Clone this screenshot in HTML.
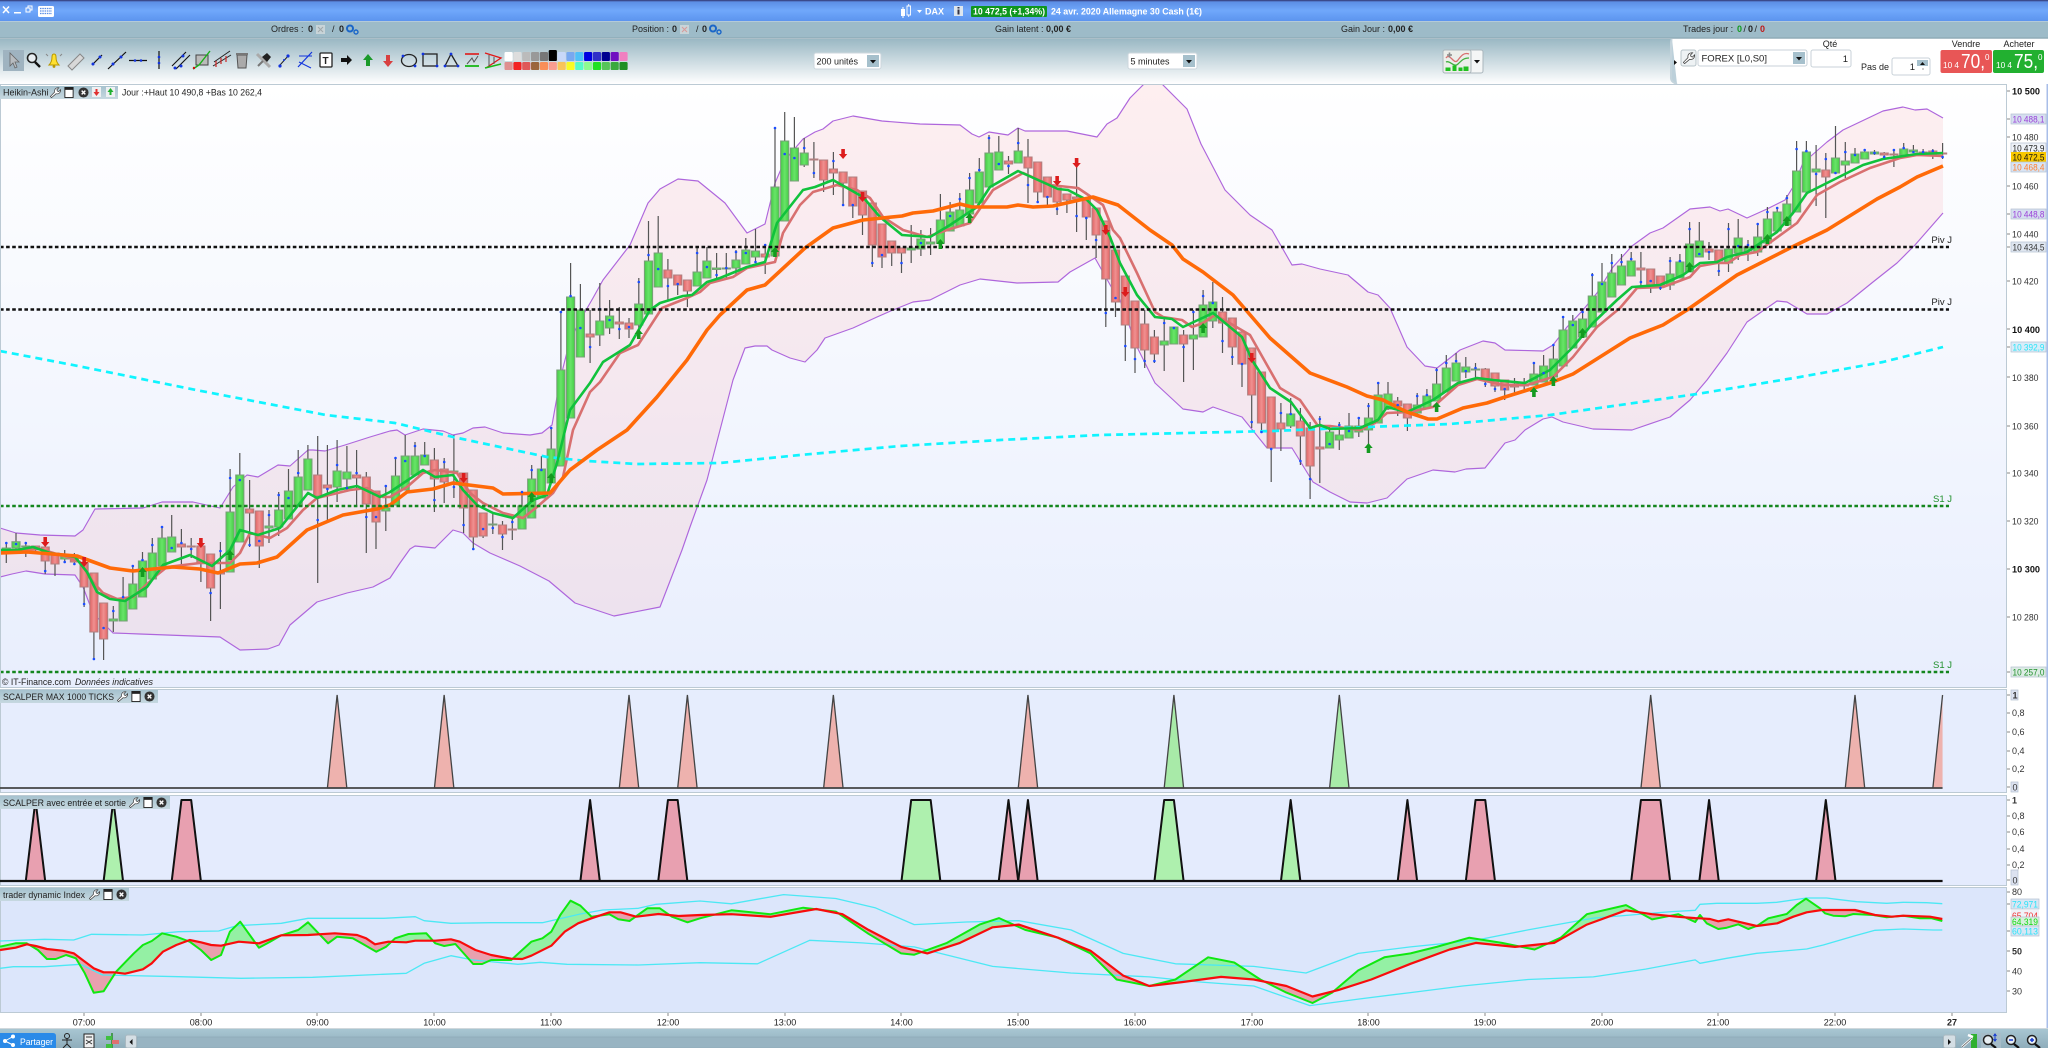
<!DOCTYPE html>
<html><head><meta charset="utf-8"><title>DAX</title>
<style>
html,body{margin:0;padding:0;background:#fff;width:2048px;height:1048px;overflow:hidden}
svg{display:block;position:absolute;left:0;top:0;filter:blur(.35px)}
text{font-family:"Liberation Sans",sans-serif;font-size:9px;fill:#222}
.b{font-weight:bold}
.w{fill:#fff;font-weight:bold}
.a{font-size:9.6px;fill:#333}
.ab{font-size:9.6px;fill:#111;font-weight:bold}
.k{font-size:9px;fill:#333}
.m{text-anchor:middle}
</style></head><body>
<svg id="s" width="2048" height="1048" viewBox="0 0 2048 1048" xmlns="http://www.w3.org/2000/svg">
<defs>
<linearGradient id="tb" x1="0" y1="0" x2="0" y2="1"><stop offset="0" stop-color="#5888e0"/><stop offset=".5" stop-color="#70a8fb"/><stop offset="1" stop-color="#5c94ee"/></linearGradient>
<linearGradient id="tool" x1="0" y1="0" x2="0" y2="1"><stop offset="0" stop-color="#9ab8c4"/><stop offset="1" stop-color="#ffffff"/></linearGradient>
<linearGradient id="chart" x1="0" y1="0" x2="0" y2="1"><stop offset="0" stop-color="#ffffff"/><stop offset="1" stop-color="#e8eefd"/></linearGradient>
<linearGradient id="lab" x1="0" y1="0" x2="0" y2="1"><stop offset="0" stop-color="#a6c2ce"/><stop offset="1" stop-color="#c6d8e0"/></linearGradient>
<linearGradient id="bot" x1="0" y1="0" x2="0" y2="1"><stop offset="0" stop-color="#a8c6d2"/><stop offset="1" stop-color="#8fadbb"/></linearGradient>
<linearGradient id="gc" x1="0" y1="0" x2="1" y2="0"><stop offset="0" stop-color="#46cc46"/><stop offset=".5" stop-color="#68e468"/><stop offset="1" stop-color="#46cc46"/></linearGradient>
<linearGradient id="rc" x1="0" y1="0" x2="1" y2="0"><stop offset="0" stop-color="#e06464"/><stop offset=".5" stop-color="#f09090"/><stop offset="1" stop-color="#e06464"/></linearGradient>
<clipPath id="cc"><rect x="1" y="85" width="2005" height="603"/></clipPath>
<symbol id="wr" viewBox="0 0 12 12"><path d="M1.6 11.6 L.4 10.4 L5 5.6 C4.4 2.6 6.5 .4 9.6 .8 L7.5 3 L8 4.5 L9.5 5 L11.6 2.9 C11.9 6 9.5 8 6.7 7.3 Z" fill="#fff" stroke="#444" stroke-width=".8"/></symbol>
<symbol id="wi" viewBox="0 0 10 12"><rect x=".5" y=".5" width="9" height="11" fill="#fff" stroke="#222"/><rect x=".5" y=".5" width="9" height="2.6" fill="#222"/></symbol>
<symbol id="xx" viewBox="0 0 12 12"><circle cx="6" cy="6" r="5.5" fill="#333"/><path d="M4 4 L8 8 M8 4 L4 8" stroke="#fff" stroke-width="1.6"/></symbol>
</defs>

<!-- title bar -->
<rect width="2048" height="21" fill="url(#tb)"/>
<rect width="2048" height="1.3" fill="#3b4a8c"/>
<rect y="21" width="2048" height="1" fill="#b4cad8"/>
<rect y="22" width="2048" height="16" fill="#9dbbc8"/>
<rect y="37.5" width="2048" height="1.2" fill="#88a4b0"/>
<rect y="39" width="2048" height="45" fill="url(#tool)"/>
<path d="M3 6.5 L9 13 M9 6.5 L3 13" stroke="#fff" stroke-width="1.5"/>
<rect x="14" y="12" width="7" height="1.5" fill="#fff"/>
<path d="M26 8 h4 v4 h-4 z M28 8 v-2 h4 v4 h-2" fill="none" stroke="#fff" stroke-width="1"/>
<rect x="38" y="6" width="16" height="11" rx="1.5" fill="#fff"/>
<path d="M40 8.5 h12 M40 11 h12 M40 13.5 h12" stroke="#5a8ee6" stroke-width="1.2" stroke-dasharray="1.5 .8"/>
<path d="M907 6 h3.5 v9 h-3.5 z M908.7 4 v2 M908.7 15 v2" fill="none" stroke="#fff" stroke-width=".9"/>
<rect x="901" y="9" width="4" height="7" fill="#fff"/><path d="M903 7 v11" stroke="#fff"/>
<path d="M917 10 h5 l-2.5 3 z" fill="#fff"/>
<text x="925" y="14.5" class="w" font-size="9.5">DAX</text>
<rect x="954" y="6" width="9" height="10" fill="#dde6ee"/><rect x="957.5" y="7" width="2" height="1.5" fill="#334"/><rect x="957.5" y="9.5" width="2" height="5" fill="#334"/>
<rect x="971" y="6" width="76" height="11" rx="1" fill="#0f961f"/>
<text x="973" y="14.5" class="w" textLength="72" lengthAdjust="spacingAndGlyphs">10 472,5 (+1,34%)</text>
<text x="1051" y="14.5" class="w" textLength="151" lengthAdjust="spacingAndGlyphs">24 avr. 2020 Allemagne 30 Cash (1€)</text>

<!-- info bar -->
<text x="271" y="32">Ordres :</text><text x="308" y="32" class="b">0</text>
<rect x="316" y="25" width="9" height="9" fill="#c8d4d8"/><path d="M318 27 l5 5 M323 27 l-5 5" stroke="#a0a8aa"/>
<text x="332" y="32">/ </text><text x="339" y="32" class="b">0</text>
<circle cx="350" cy="28.5" r="3" fill="none" stroke="#1a66c8" stroke-width="2"/><circle cx="356" cy="32" r="2" fill="none" stroke="#1a66c8" stroke-width="1.4"/>
<text x="632" y="32">Position :</text><text x="672" y="32" class="b">0</text>
<rect x="680" y="25" width="9" height="9" fill="#c8d4d8"/><path d="M682 27 l5 5 M687 27 l-5 5" stroke="#d89a9a"/>
<text x="696" y="32">/ </text><text x="702" y="32" class="b">0</text>
<circle cx="713" cy="28.5" r="3" fill="none" stroke="#1a66c8" stroke-width="2"/><circle cx="719" cy="32" r="2" fill="none" stroke="#1a66c8" stroke-width="1.4"/>
<text x="995" y="32">Gain latent :</text><text x="1046" y="32" class="b">0,00 €</text>
<text x="1341" y="32">Gain Jour :</text><text x="1388" y="32" class="b">0,00 €</text>
<text x="1683" y="32">Trades jour :</text>
<text x="1737" y="32" class="b" style="fill:#109a20">0</text><text x="1743.5" y="32">/</text><text x="1748" y="32" class="b">0</text><text x="1754.5" y="32">/</text><text x="1760" y="32" class="b" style="fill:#c01818">0</text>

<!-- toolbar icons -->
<rect x="3" y="50" width="21" height="21" fill="#9fb3c0"/>
<path d="M10 53 L10 66 L13 63 L15 68 L17 67 L15 62 L19 62 Z" fill="#b8bcc0" stroke="#666" stroke-width=".8"/>
<circle cx="32" cy="58" r="4.5" fill="#e8eef2" stroke="#222" stroke-width="1.6"/><path d="M35 62 L40 67" stroke="#111" stroke-width="2.4"/>
<path d="M49 65 Q52 62 52 57 Q52 54 54 54 Q56 54 56 57 Q56 62 59 65 Z" fill="#ffe030" stroke="#b89800"/><circle cx="54" cy="66.5" r="1.4" fill="#b89800"/>
<path d="M46 54 l2 2 M62 54 l-2 2" stroke="#888"/>
<path d="M68 66 L80 54 L84 58 L72 70 Z" fill="#d8d8d8" stroke="#888"/>
<path d="M92 65 L102 55" stroke="#111" stroke-width="1.2"/><circle cx="93" cy="64" r="1.5" fill="#13d"/><circle cx="100" cy="57" r="1.5" fill="#13d"/>
<path d="M108 69 L126 52" stroke="#111" stroke-width="1.2"/><circle cx="113" cy="64" r="1.5" fill="#13d"/><circle cx="121" cy="57" r="1.5" fill="#13d"/>
<path d="M129 60.5 H147" stroke="#111" stroke-width="1.2"/><circle cx="135" cy="60.5" r="1.3" fill="#13d"/><circle cx="141" cy="60.5" r="1.3" fill="#13d"/>
<path d="M159 51 V69" stroke="#111" stroke-width="1.2"/><circle cx="159" cy="57" r="1.3" fill="#13d"/><circle cx="159" cy="63" r="1.3" fill="#13d"/>
<path d="M172 66 L186 52 M176 69 L190 55" stroke="#111" stroke-width="1.1"/><circle cx="175" cy="68" r="1.5" fill="#13d"/><circle cx="183" cy="56" r="1.5" fill="#13d"/><circle cx="181" cy="66" r="1.5" fill="#13d"/>
<rect x="196" y="55" width="12" height="10" fill="#bbb" stroke="#444"/><path d="M193 69 L199 65 L210 51" stroke="#1ab01a" stroke-width="1.4" fill="none"/><circle cx="194" cy="68" r="1.2" fill="#c11"/>
<path d="M213 66 L231 55 M214 62 L230 51" stroke="#222" stroke-width="1"/><path d="M216 61 v6 M221 58 v6 M226 56 v6" stroke="#c33" stroke-width="1.3"/>
<path d="M237 55 h10 l-1 13 h-8 z" fill="#aaa" stroke="#555"/><rect x="236" y="53" width="12" height="2" fill="#777"/>
<path d="M257 54 L270 67" stroke="#aaa" stroke-width="3"/><path d="M262 57 l5 -4 l4 4 l-4 5 z" fill="#222"/><path d="M258 66 l5 -5" stroke="#777" stroke-width="2"/>
<path d="M280 65 L289 55" stroke="#222"/><circle cx="280" cy="66" r="1.6" fill="#13d"/><circle cx="288" cy="56" r="1.6" fill="#13d"/><circle cx="284" cy="60" r="1" fill="#13d"/>
<path d="M298 67 L312 52" stroke="#13d" stroke-width="1.2"/><path d="M299 56 H312" stroke="#13d" stroke-width="1"/><path d="M299 62 L311 68" stroke="#13d"/>
<rect x="320" y="53" width="12" height="14" rx="1" fill="#fff" stroke="#222" stroke-width="1.3"/><text x="322.5" y="64" class="b" style="font-size:10px">T</text>
<path d="M341 58 h6 v-3 l5 5 l-5 5 v-3 h-6 z" fill="#111"/>
<path d="M368 54 l5 6 h-3 v6 h-4 v-6 h-3 z" fill="#1a9a2a"/>
<path d="M388 67 l5 -6 h-3 v-6 h-4 v6 h-3 z" fill="#d84040"/>
<ellipse cx="409" cy="60.5" rx="7.5" ry="6" fill="none" stroke="#222" stroke-width="1.3"/><circle cx="403" cy="56" r="1.4" fill="#13d"/><circle cx="415" cy="66" r="1.4" fill="#13d"/>
<rect x="423" y="54" width="14" height="12" fill="none" stroke="#222" stroke-width="1.3"/><circle cx="423" cy="54" r="1.4" fill="#13d"/><circle cx="437" cy="66" r="1.4" fill="#13d"/>
<path d="M451 54 L445 66 H458 Z" fill="none" stroke="#222" stroke-width="1.3"/><circle cx="451" cy="54" r="1.4" fill="#13d"/><circle cx="445" cy="66" r="1.4" fill="#13d"/><circle cx="458" cy="66" r="1.4" fill="#13d"/>
<path d="M465 54 H479" stroke="#e01818" stroke-width="1.6"/><path d="M465 66 H479" stroke="#18b818" stroke-width="1.8"/><path d="M467 64 L472 58 L474 62 L478 56" stroke="#555" fill="none"/>
<path d="M485 53 L501 58 L486 68" stroke="#e01818" fill="none" stroke-width="1.3"/><path d="M485 68 L501 64" stroke="#18b818" stroke-width="1.6"/><path d="M489 55 v11 M494 57 v7" stroke="#555"/>
<g id="sw"></g>

<!-- dropdowns -->
<rect x="814" y="53" width="67" height="16" rx="2" fill="#fff" stroke="#ccd6dc"/>
<text x="816.5" y="64.5">200 unités</text>
<rect x="867" y="55" width="12" height="12" fill="#a6c0cc"/><path d="M870 60 h6 l-3 3.5 z" fill="#111"/>
<rect x="1128" y="53" width="69" height="16" rx="2" fill="#fff" stroke="#ccd6dc"/>
<text x="1130.5" y="64.5">5 minutes</text>
<rect x="1183" y="55" width="12" height="12" fill="#a6c0cc"/><path d="M1186 60 h6 l-3 3.5 z" fill="#111"/>
<rect x="1443" y="50" width="40" height="23" rx="2" fill="#f4f6f6" stroke="#aab6bc"/>
<rect x="1443" y="50" width="28" height="23" rx="2" fill="#eceeea" stroke="#aab6bc"/>
<path d="M1446 58 C1450 52 1454 66 1458 60 C1461 56 1464 52 1469 54" stroke="#d87070" fill="none" stroke-width="1.3"/>
<path d="M1446 62 C1450 60 1454 68 1458 64 C1462 60 1464 58 1469 58" stroke="#40b040" fill="none" stroke-width="1.3"/>
<path d="M1447 55 h5 M1449.5 52.5 v5" stroke="#888" stroke-width="1.6"/>
<path d="M1446 71 v-3 h4 v3 M1453 71 v-5 h3 v5 M1459 71 v-3 h3 v3 M1464 71 v-4 h4 v4" fill="#20c020" stroke="#20c020"/>
<path d="M1474 60 h6 l-3 3.5 z" fill="#111"/>

<!-- order panel -->
<path d="M1672 39 H2048 V84 H1678 Q1672 82 1672 78 Z" fill="#fff"/>
<path d="M1672 39 Q1671 40 1671 44 V78 Q1671 82 1677 84" fill="#bcd0da" stroke="#c4d4dc" stroke-width="2"/>
<path d="M1674 60 l3 2.5 l-3 2.5 z" fill="#111"/>
<rect x="1681" y="50" width="15" height="16" rx="2" fill="#eef2f4" stroke="#b8c4ca"/>
<use href="#wr" x="1683" y="52" width="12" height="12"/>
<rect x="1698" y="50" width="109" height="16" rx="2" fill="#fff" stroke="#c8d2d8"/>
<text x="1701.5" y="61.5" style="font-size:9.5px">FOREX [L0,S0]</text>
<rect x="1793" y="52" width="12" height="12" fill="#a6c0cc"/><path d="M1796 57 h6 l-3 3.5 z" fill="#111"/>
<text x="1830" y="47" class="m">Qté</text>
<rect x="1811" y="50" width="40" height="17" rx="2" fill="#fff" stroke="#c8d2d8"/>
<text x="1848" y="62" text-anchor="end" style="font-size:9.5px">1</text>
<text x="1861" y="70">Pas de</text>
<rect x="1892" y="58" width="38" height="17" rx="2" fill="#fff" stroke="#c8d2d8"/>
<text x="1915" y="70" text-anchor="end" style="font-size:9.5px">1</text>
<rect x="1917" y="60" width="11" height="6" fill="#a6c0cc"/><path d="M1920 65 h5 l-2.5 -3 z" fill="#111"/><path d="M1922 69 h2" stroke="#999"/>
<text x="1966" y="47" class="m">Vendre</text><text x="2019" y="47" class="m">Acheter</text>
<rect x="1940.5" y="50" width="51.5" height="23" rx="2" fill="#e85656"/>
<rect x="1993" y="50" width="51" height="23" rx="2" fill="#22b030"/>
<text x="1943" y="68" style="fill:#fff;font-size:8.5px" textLength="16" lengthAdjust="spacingAndGlyphs">10 4</text>
<text x="1961" y="68" style="fill:#fff;font-size:20px" textLength="24" lengthAdjust="spacingAndGlyphs">70,</text>
<text x="1985" y="60" style="fill:#fff;font-size:8px">0</text>
<text x="1996" y="68" style="fill:#fff;font-size:8.5px" textLength="16" lengthAdjust="spacingAndGlyphs">10 4</text>
<text x="2014" y="68" style="fill:#fff;font-size:20px" textLength="24" lengthAdjust="spacingAndGlyphs">75,</text>
<text x="2038" y="60" style="fill:#fff;font-size:8px">0</text>

<!-- chart areas -->
<rect x="0" y="84" width="2048" height="964" fill="#fff"/>
<rect x=".5" y="84.5" width="2006" height="603" fill="url(#chart)" stroke="#bccad4"/>
<rect x=".5" y="689.5" width="2006" height="103" fill="#e6edfd" stroke="#bccad4"/>
<rect x=".5" y="795.5" width="2006" height="90" fill="#e4ebfd" stroke="#bccad4"/>
<rect x=".5" y="887.5" width="2006" height="125" fill="#dce6fb" stroke="#bccad4"/>
<rect x="2046.5" y="84" width="1.5" height="950" fill="#a8bee8"/>

<g id="main" clip-path="url(#cc)"></g>
<g id="p1"></g><g id="p2"></g><g id="p3"></g>

<!-- chart labels -->
<rect x="0" y="86" width="118" height="13" fill="url(#lab)"/>
<text x="3" y="95.5">Heikin-Ashi</text>
<use href="#wr" x="50" y="87" width="11" height="11"/><use href="#wi" x="64" y="87" width="10" height="11"/><use href="#xx" x="78" y="87" width="11" height="11"/>
<rect x="92" y="87" width="9" height="10" fill="#eef0f2"/><path d="M96.5 96 l3 -4 h-2 v-3 h-2 v3 h-2 z" fill="#e03030"/>
<rect x="106" y="87" width="9" height="10" fill="#eef0f2"/><path d="M110.5 88 l3 4 h-2 v3 h-2 v-3 h-2 z" fill="#20b030"/>
<text x="122" y="95.5" textLength="140" lengthAdjust="spacingAndGlyphs">Jour :+Haut 10 490,8 +Bas 10 262,4</text>
<text x="2" y="685" textLength="69" lengthAdjust="spacingAndGlyphs">© IT-Finance.com</text><text x="75" y="685" font-style="italic" textLength="78" lengthAdjust="spacingAndGlyphs">Données indicatives</text>

<rect x="0" y="690" width="158" height="13" fill="url(#lab)"/>
<text x="3" y="700" textLength="111" lengthAdjust="spacingAndGlyphs">SCALPER MAX 1000 TICKS</text>
<use href="#wr" x="117" y="691" width="11" height="11"/><use href="#wi" x="131" y="691" width="10" height="11"/><use href="#xx" x="144" y="691" width="11" height="11"/>
<rect x="0" y="796" width="170" height="13" fill="url(#lab)"/>
<text x="3" y="806" textLength="123" lengthAdjust="spacingAndGlyphs">SCALPER avec entrée et sortie</text>
<use href="#wr" x="129" y="797" width="11" height="11"/><use href="#wi" x="143" y="797" width="10" height="11"/><use href="#xx" x="156" y="797" width="11" height="11"/>
<rect x="0" y="888" width="129" height="13" fill="url(#lab)"/>
<text x="3" y="898" textLength="82" lengthAdjust="spacingAndGlyphs">trader dynamic Index</text>
<use href="#wr" x="89" y="889" width="11" height="11"/><use href="#wi" x="103" y="889" width="10" height="11"/><use href="#xx" x="116" y="889" width="11" height="11"/>

<text x="1952" y="243" text-anchor="end" style="font-size:9.5px">Piv J</text>
<text x="1952" y="305" text-anchor="end" style="font-size:9.5px">Piv J</text>
<text x="1952" y="502" text-anchor="end" style="font-size:9.5px;fill:#20902c">S1 J</text>
<text x="1952" y="668" text-anchor="end" style="font-size:9.5px;fill:#20902c">S1 J</text>

<!-- y axis -->
<path id="ticks" stroke="#888" stroke-width="1" d="M2007 91h3M2007 137h3M2007 186h3M2007 234h3M2007 281h3M2007 329h3M2007 377h3M2007 426h3M2007 473h3M2007 521h3M2007 569h3M2007 617h3M2007 119h3M2007 214h3M2007 247h3M2007 347h3M2007 672h3M2007 695h3M2007 713h3M2007 732h3M2007 751h3M2007 769h3M2007 787h3M2007 800h3M2007 816h3M2007 832h3M2007 849h3M2007 865h3M2007 880h3M2007 892h3M2007 904h3M2007 931h3M2007 951h3M2007 971h3M2007 991h3M84 1013v3M201 1013v3M317 1013v3M434 1013v3M551 1013v3M668 1013v3M785 1013v3M901 1013v3M1018 1013v3M1135 1013v3M1252 1013v3M1368 1013v3M1485 1013v3M1602 1013v3M1718 1013v3M1835 1013v3M1952 1013v3"/>
<text x="2012" y="94.5" class="ab" textLength="28" lengthAdjust="spacingAndGlyphs">10 500</text>
<rect x="2011" y="114" width="35" height="10" fill="#d6def0" stroke="#b4c0d0" stroke-width=".7"/><text x="2012.5" y="122.5" class="a" style="fill:#9a40d8" textLength="32" lengthAdjust="spacingAndGlyphs">10 488,1</text>
<text x="2012" y="140.5" class="a" textLength="26.5" lengthAdjust="spacingAndGlyphs">10 480</text>
<rect x="2011" y="143" width="35" height="9.5" fill="#eef2f8" stroke="#b4c0d0" stroke-width=".7"/><text x="2012.5" y="151.5" class="a" style="fill:#222" textLength="32" lengthAdjust="spacingAndGlyphs">10 473,9</text>
<rect x="2011" y="152" width="35" height="10" fill="#f8c800"/><text x="2012.5" y="160.5" class="a" style="fill:#111" textLength="32" lengthAdjust="spacingAndGlyphs">10 472,5</text>
<rect x="2011" y="162" width="35" height="10" fill="#d8e4f4" stroke="#b4c0d0" stroke-width=".7"/><text x="2012.5" y="170.5" class="a" style="fill:#ff8030" textLength="32" lengthAdjust="spacingAndGlyphs">10 468,4</text>
<text x="2012" y="189.5" class="a" textLength="26.5" lengthAdjust="spacingAndGlyphs">10 460</text>
<rect x="2011" y="209" width="35" height="10" fill="#d6def0" stroke="#b4c0d0" stroke-width=".7"/><text x="2012.5" y="217.5" class="a" style="fill:#9a40d8" textLength="32" lengthAdjust="spacingAndGlyphs">10 448,8</text>
<text x="2012" y="237.5" class="a" textLength="26.5" lengthAdjust="spacingAndGlyphs">10 440</text>
<rect x="2011" y="242" width="35" height="10" fill="#dfe6f0" stroke="#b4c0d0" stroke-width=".7"/><text x="2012.5" y="250.5" class="a" textLength="32" lengthAdjust="spacingAndGlyphs">10 434,5</text>
<text x="2012" y="284.5" class="a" textLength="26.5" lengthAdjust="spacingAndGlyphs">10 420</text>
<text x="2012" y="333" class="ab" textLength="28" lengthAdjust="spacingAndGlyphs">10 400</text>
<rect x="2011" y="342" width="35" height="10" fill="#d8ecf8" stroke="#b4c0d0" stroke-width=".7"/><text x="2012.5" y="350.5" class="a" style="fill:#28e4f8" textLength="32" lengthAdjust="spacingAndGlyphs">10 392,9</text>
<text x="2012" y="381" class="a" textLength="26.5" lengthAdjust="spacingAndGlyphs">10 380</text>
<text x="2012" y="429.5" class="a" textLength="26.5" lengthAdjust="spacingAndGlyphs">10 360</text>
<text x="2012" y="476.5" class="a" textLength="26.5" lengthAdjust="spacingAndGlyphs">10 340</text>
<text x="2012" y="524.5" class="a" textLength="26.5" lengthAdjust="spacingAndGlyphs">10 320</text>
<text x="2012" y="572.5" class="ab" textLength="28" lengthAdjust="spacingAndGlyphs">10 300</text>
<text x="2012" y="620.5" class="a" textLength="26.5" lengthAdjust="spacingAndGlyphs">10 280</text>
<rect x="2011" y="667" width="35" height="10" fill="#dcece4" stroke="#b4c0d0" stroke-width=".7"/><text x="2012.5" y="675.5" class="a" style="fill:#20902c" textLength="32" lengthAdjust="spacingAndGlyphs">10 257,0</text>

<rect x="2011" y="690" width="7" height="10" fill="#dce2f0" stroke="#b4c0d0" stroke-width=".7"/><text x="2012.5" y="698.5" class="k b">1</text>
<text x="2012" y="716" class="k">0,8</text><text x="2012" y="735" class="k">0,6</text><text x="2012" y="754" class="k">0,4</text><text x="2012" y="772" class="k">0,2</text>
<rect x="2011" y="782" width="7" height="10" fill="#dce2f0" stroke="#b4c0d0" stroke-width=".7"/><text x="2012.5" y="790.5" class="k">0</text>
<text x="2012" y="803.5" class="k b">1</text>
<text x="2012" y="819" class="k">0,8</text><text x="2012" y="835" class="k">0,6</text><text x="2012" y="852" class="k">0,4</text><text x="2012" y="868" class="k">0,2</text>
<rect x="2011" y="870" width="7" height="15" fill="#dce2f0" stroke="#b4c0d0" stroke-width=".7"/><text x="2012.5" y="883.5" class="k">0</text>
<text x="2012" y="895" class="k">80</text>
<rect x="2011" y="899" width="28" height="10" fill="#d8e6f4" stroke="#b4c0d0" stroke-width=".7"/><text x="2012" y="907.5" class="k" style="fill:#28e4f8" textLength="26" lengthAdjust="spacingAndGlyphs">72,971</text>
<rect x="2011" y="910" width="28" height="8" fill="#f0f2f8"/><text x="2012" y="919" class="k" style="fill:#f03030" textLength="26" lengthAdjust="spacingAndGlyphs">65,704</text>
<rect x="2011" y="917" width="28" height="9" fill="#d8f0dc" stroke="#b4c0d0" stroke-width=".7"/><text x="2012" y="925" class="k" style="fill:#10d810" textLength="26" lengthAdjust="spacingAndGlyphs">64,319</text>
<rect x="2011" y="926" width="28" height="10" fill="#d8e6f4" stroke="#b4c0d0" stroke-width=".7"/><text x="2012" y="934.5" class="k" style="fill:#28e4f8" textLength="26" lengthAdjust="spacingAndGlyphs">60,113</text>
<text x="2012" y="954.5" class="k b">50</text><text x="2012" y="974.5" class="k">40</text><text x="2012" y="994.5" class="k">30</text>

<!-- x axis -->
<g text-anchor="middle">
<text x="84" y="1025.5" text-anchor="middle">07:00</text><text x="201" y="1025.5" text-anchor="middle">08:00</text><text x="317.5" y="1025.5" text-anchor="middle">09:00</text><text x="434.5" y="1025.5" text-anchor="middle">10:00</text><text x="551" y="1025.5" text-anchor="middle">11:00</text><text x="668" y="1025.5" text-anchor="middle">12:00</text><text x="785" y="1025.5" text-anchor="middle">13:00</text><text x="901.5" y="1025.5" text-anchor="middle">14:00</text><text x="1018" y="1025.5" text-anchor="middle">15:00</text><text x="1135" y="1025.5" text-anchor="middle">16:00</text><text x="1252" y="1025.5" text-anchor="middle">17:00</text><text x="1368.5" y="1025.5" text-anchor="middle">18:00</text><text x="1485" y="1025.5" text-anchor="middle">19:00</text><text x="1602" y="1025.5" text-anchor="middle">20:00</text><text x="1718" y="1025.5" text-anchor="middle">21:00</text><text x="1835" y="1025.5" text-anchor="middle">22:00</text><text x="1952" y="1025.5" text-anchor="middle" class="b">27</text>
</g>

<!-- bottom bar -->
<rect y="1028" width="2048" height="1.3" fill="#d0d8dc"/>
<rect y="1029" width="2048" height="19" fill="url(#bot)"/>
<rect y="1037" x="137" width="1806" height="11" fill="#98b4c2" stroke="#8aa6b4" stroke-width=".6"/>
<path d="M0 1033 H53 Q56 1033 56 1036 V1048 H0 Z" fill="#2a8ae8"/>
<circle cx="5" cy="1041" r="2" fill="#fff"/><circle cx="13" cy="1036.5" r="2" fill="#fff"/><circle cx="13" cy="1045" r="2" fill="#fff"/><path d="M5 1041 L13 1036.5 M5 1041 L13 1045" stroke="#fff"/>
<text x="20" y="1045" style="fill:#fff;font-size:9.5px" textLength="33" lengthAdjust="spacingAndGlyphs">Partager</text>
<circle cx="67" cy="1036" r="2.5" fill="none" stroke="#222"/><path d="M62 1040 h10 M67 1038 v6 M63 1048 l4 -4 l4 4" stroke="#222" fill="none"/>
<rect x="84" y="1034" width="10" height="14" fill="#f0f0f0" stroke="#222"/><path d="M86 1037 h6 M86 1040 l6 4 M92 1040 l-6 4" stroke="#333"/>
<path d="M112 1033 v15" stroke="#2a8a2a" stroke-width="1.5"/><rect x="106" y="1036" width="6" height="4" fill="#40c040"/><rect x="112" y="1040" width="7" height="4" fill="#e07070"/><rect x="106" y="1044" width="6" height="4" fill="#40c040"/>
<rect x="125.5" y="1035" width="11" height="13" rx="2" fill="#d4dee4" stroke="#a8b8c0"/><path d="M132.5 1039 v6 l-3 -3 z" fill="#111"/>
<rect x="1943.5" y="1035" width="12" height="13" rx="2" fill="#d4dee4" stroke="#a8b8c0"/><path d="M1948 1039 v6 l3 -3 z" fill="#111"/>
<rect x="1971" y="1034" width="6" height="14" fill="#30b030"/><path d="M1962 1047 L1972 1038 M1968 1035 l5 2" stroke="#fff" stroke-width="2.5"/><path d="M1962 1047 L1972 1038" stroke="#555" stroke-width=".8" fill="none"/>
<rect x="1981" y="1033" width="20" height="15" fill="#a6bcc8"/>
<circle cx="1988" cy="1040" r="4.5" fill="#e8eef2" stroke="#222" stroke-width="1.5"/><path d="M1991 1044 L1996 1048" stroke="#111" stroke-width="2.2"/><path d="M1995 1034 v7 M1993.5 1036 l1.5 -2 l1.5 2 M1993.5 1039 l1.5 2 l1.5 -2" stroke="#1238d0" fill="none"/>
<circle cx="2011" cy="1040" r="4.5" fill="#e8eef2" stroke="#222" stroke-width="1.5"/><path d="M2014 1044 L2019 1048" stroke="#111" stroke-width="2.2"/><path d="M2009 1040 h4" stroke="#1238d0" stroke-width="1.5"/>
<circle cx="2032" cy="1040" r="4.5" fill="#e8eef2" stroke="#222" stroke-width="1.5"/><path d="M2035 1044 L2040 1048" stroke="#111" stroke-width="2.2"/><path d="M2030 1040 h4 M2032 1038 v4" stroke="#1238d0" stroke-width="1.5"/>
</svg>
<script>
var X=function(i){return 6.3+9.73*i};
var C="g 548 552 543 563 543|g 541.7 548 533 550 544|g 546 547 542 557 543|r 546 548 546 552 0|r 547 561 540 574 571|r 553 564 553 576 0|g 557 559 550 562 562|r 557 562 553 564 564|r 563 587 558 607 604|r 573 632 573 659 659|r 603 639 603 660 628|g 619 621 606 632 611|g 600 621 577 621 597|g 584 609 566 609 566|g 561 597 552 597 560|g 553 579 538 579 545|g 538 566 527 566 527|g 537 552 515 552 548|r 544 547 529 566 543|r 546 547 538 558 549|r 546 562 538 582 0|r 554 588 554 621 593|r 572 574 542 609 551|g 512 572 469 572 478|g 475 542 453 542 480|r 509 513 480 547 545|r 511 546 511 568 541|g 526 528 510 543 515|g 510 527 492 536 495|g 491 519 469 519 498|g 477 505 450 505 473|g 459 490 445 490 0|r 475 496 436 583 520|r 485 488 445 522 489|g 471 487 440 502 465|g 472 479 446 492 488|r 475 478 450 505 473|r 477 504 472 553 517|r 491 522 491 549 517|g 508 511 486 531 486|g 476 505 458 505 458|g 456 490 435 490 461|g 456 475 442 475 446|g 455 465 442 465 456|r 460 479 448 512 500|r 469 482 458 503 462|g 471 473 435 498 487|r 473 508 473 533 525|r 490 537 490 550 549|r 513 536 513 538 529|g 524 525 513 534 528|r 525 534 521 550 537|r 529 530 517 540 522|g 506 529 491 529 492|g 479 518 465 518 470|g 469 498 456 498 470|g 449 483 427 483 428|g 370 466 312 466 312|g 297 418 263 418 296|g 310 357 284 357 328|r 334 337 310 363 347|g 321 335 283 346 309|g 316 328 300 334 320|r 322 324 307 339 329|r 323 329 318 338 327|g 304 325 278 338 282|g 261 314 221 314 255|g 253 287 216 287 269|r 270 278 259 300 286|r 275 285 275 295 284|r 280 291 280 307 0|g 272 286 247 286 253|g 261 278 247 278 267|g 268 269.5 253 280 275|g 268 269 253 278 268|g 260 268 250 275 252|g 250 264 238 264 253|g 251 257 229 262 262|r 254 257 245 274 245|g 187 256 128 256 128|g 141 221 112 221 154|g 148 181 117 181 158|g 153 165 138 167 148|r 159 160 142 178 173|r 160 180 160 192 0|r 169 173 152 195 161|r 172 183 172 205 205|r 177 206 177 218 205|r 191 215 191 235 0|r 203 245 203 267 263|r 224 257 224 268 255|r 241 253 241 266 0|r 248 253 248 273 263|g 248 250 225 263 0|g 239 249 230 256 243|g 242 244 228 255 0|g 220 243 194 243 0|g 212 231 202 231 216|g 210 226 193 226 199|g 190 214 173 214 178|g 172 203 158 203 170|g 153 187 135 187 138|g 152 170 136 170 164|r 161 164 156 174 166|g 151 163 128 163 143|r 157 168 139 203 185|r 162 192 162 203 202|r 177 197 177 205 197|r 188 202 188 215 209|r 194 200 194 213 0|r 197 199 158 232 216|r 198 217 198 240 218|r 208 235 208 258 240|r 221 279 221 327 313|r 250 302 250 317 298|r 276 325 276 361 346|r 301 348 301 373 359|r 324 350 310 368 361|r 337 354 330 363 361|g 341 345 317 371 323|g 327 344 327 344 328|r 335 344 330 382 347|g 335 339 310 370 312|g 305 337 290 337 296|g 302 321 282 328 303|r 312 323 297 353 341|r 318 347 318 365 357|r 332 364 332 387 364|r 348 395 348 428 422|r 372 423 372 432 432|r 397 448 397 482 449|r 423 429 403 451 413|g 414 426 398 428 414|r 421 436 408 465 461|r 428 466 422 499 479|r 447 449 416 483 419|g 432 448 427 448 444|g 435 440 422 450 425|g 426 438 413 438 431|g 426 432 417 437 418|g 418 430 403 450 406|g 395 423 382 423 383|g 394 409 382 410 0|r 401 406 397 416 405|r 404 418 404 431 0|g 405 413 393 415 396|g 396 408 389 408 395|g 384 401 368 401 370|g 368 392 355 392 363|g 363 381 353 381 361|g 367 372 357 378 371|g 369 370 363 378 368|r 369 379 368 387 384|r 373 386 373 392 389|r 380 390 380 400 389|r 384 387 378 393 0|r 385 386 378 390 0|g 374 385 362 385 363|g 366 382 355 382 373|g 359 377 344 377 345|g 330 366 316 366 317|g 321 348 315 348 325|g 319 337 310 337 312|g 296 327 273 327 275|g 282 312 263 312 284|g 273 297 254 297 263|g 266 285 254 285 262|g 261 276 252 276 259|r 268 270 252 286 282|r 269 286 269 293 281|r 276 287 276 290 288|g 274 285 257 290 261|g 262 278 254 278 261|g 244 272 222 272 229|g 241 257 222 257 254|r 249 252 242 260 252|r 250 261 250 276 271|g 249 263 223 272 229|g 238 253 219 260 246|g 247 251 240 261 245|g 237 252 223 256 224|g 219 243 207 243 212|g 212 231 207 231 208|g 204 225 195 225 198|g 171 212 141 212 149|g 152 192 141 192 151|g 169 172 145 206 174|r 170 177 153 218 159|g 158 173 126 173 173|g 161 165 142 178 152|g 154 163 148 163 155|g 152 159 150 159 150|g 152 154 150 155 153|r 153 155 152 160 157|r 154 155 149 167 150|g 149 155 143 155 148|g 150 152 145 153 152|r 152 153 149 154 152|r 151 153 149 159 151|r 153 154 143 159 157".split("|");
var wicks="",gb="",rb="",dots="";
C.forEach(function(s,i){var p=s.split(" "),c=p[0],t=+p[1],b=+p[2],wt=+p[3],wb=+p[4],d=+p[5],x=X(i);
 wicks+="M"+x.toFixed(1)+" "+wt+"V"+wb;
 var h=b-t,r='<rect x="'+(x-4.1).toFixed(1)+'" y="'+t+'" width="8.2" height="'+h+'" fill="url(#'+(c=="g"?"gc":"rc")+')" stroke="'+(c=="g"?"#7a9e7a":"#b08080")+'" stroke-width="1"/>';
 if(c=="g")gb+=r;else rb+=r;
 if(d)dots+='<circle cx="'+x.toFixed(1)+'" cy="'+d+'" r="1.3" fill="#1a4cff"/>';
});
var up=[0,528,16,533,40,535,75,536,83,530,95,509,143,508,162,502,193,502,220,508,233,487,247,475,258,477,278,465,290,466,308,450,313,450,325,451,345,445,370,437,390,431,397,430,405,435,423,429,443,431,453,435,463,433,473,428,485,427,503,433,530,435,542,433,552,425,557,397,560,380,570,340,582,317,593,298,603,280,630,245,648,203,660,189,678,179,698,181,725,203,747,233,765,224,775,183,785,160,803,139,815,132,823,129,833,121,853,116,882,121,920,124,960,125,972,134,979,137,989,132,1008,135,1018,128,1025,131,1067,131,1097,137,1107,124,1117,118,1130,98,1140,88,1148,80,1155,78,1162,84,1187,109,1201,144,1225,190,1250,215,1272,230,1292,265,1302,264,1320,269,1348,275,1368,292,1378,295,1390,308,1407,347,1425,366,1437,368,1450,358,1460,350,1483,341,1495,343,1505,350,1543,351,1553,345,1567,327,1583,310,1597,293,1613,267,1632,246,1650,233,1663,228,1690,209,1710,207,1720,211,1728,209,1747,218,1767,209,1785,200,1793,187,1803,163,1827,142,1843,130,1883,111,1903,107,1915,110,1927,109,1943,118];
var lo=[0,577,12,574,26,571,45,574,75,575,83,587,93,613,113,633,140,634,220,637,240,650,268,649,279,645,290,625,317,602,347,593,373,587,390,578,400,563,410,549,415,546,435,548,453,530,463,533,473,543,490,553,520,566,549,581,575,603,614,616,660,607,682,550,690,527,707,480,720,430,733,380,745,348,755,346,767,346,772,350,790,358,805,362,817,350,825,338,853,328,877,317,893,310,913,302,930,300,960,285,980,279,1017,283,1058,282,1070,272,1095,258,1113,290,1120,300,1137,347,1155,383,1183,409,1203,412,1213,407,1242,417,1267,448,1292,448,1313,482,1330,492,1350,502,1367,503,1387,498,1407,479,1433,470,1455,472,1466,469,1485,468,1505,443,1515,440,1525,430,1543,419,1552,417,1563,422,1593,429,1632,430,1670,417,1690,400,1707,380,1727,353,1747,322,1777,301,1787,302,1807,314,1827,314,1847,303,1873,282,1897,263,1915,245,1943,213];
var gr=[0,550,17,550,33,547,50,553,75,557,87,572,97,592,110,599,125,601,147,587,163,565,190,555,212,566,230,550,240,530,258,535,280,528,308,493,317,498,337,490,357,486,380,497,390,492,423,470,435,477,453,475,463,490,477,505,493,513,513,518,533,500,547,495,557,463,570,410,590,383,603,362,630,345,650,310,660,303,683,296,692,295,707,282,720,278,747,267,765,262,777,223,803,190,815,187,833,180,863,197,880,217,902,235,930,237,950,225,977,207,990,187,1018,171,1058,189,1068,190,1087,200,1097,210,1110,237,1120,263,1137,295,1155,317,1172,319,1183,327,1213,313,1242,337,1252,360,1270,388,1291,402,1310,428,1320,425,1330,429,1360,428,1378,420,1387,407,1407,412,1433,400,1458,383,1477,378,1493,380,1525,383,1550,370,1573,347,1593,323,1617,300,1632,287,1660,285,1683,275,1700,263,1717,262,1727,257,1747,252,1777,232,1793,213,1807,193,1827,183,1863,165,1883,159,1917,154,1943,153];
var sa=[0,552,40,549,67,557,80,562,93,582,103,593,117,599,133,597,157,575,167,567,200,563,230,563,240,553,250,533,270,538,287,528,303,510,317,498,350,490,367,488,383,497,390,497,407,487,423,473,435,470,457,473,470,493,483,503,503,513,523,518,537,507,553,493,563,477,573,430,590,392,600,382,620,353,638,345,662,308,687,298,700,292,710,283,733,277,747,268,775,262,783,233,800,205,813,192,837,185,857,190,870,198,883,217,903,230,927,237,947,230,970,223,993,190,1023,173,1050,185,1078,188,1103,205,1113,230,1120,238,1137,273,1155,312,1163,317,1182,320,1192,327,1203,323,1215,315,1233,325,1250,335,1280,388,1300,400,1318,426,1330,426,1360,430,1375,423,1387,413,1410,412,1433,407,1458,385,1477,379,1503,385,1527,385,1553,377,1573,357,1597,327,1620,308,1637,288,1663,287,1690,277,1700,266,1717,263,1728,263,1740,255,1757,252,1797,223,1817,195,1840,182,1870,168,1900,158,1917,155,1943,156];
var or=[0,553,27,552,77,556,110,568,133,571,173,567,200,569,218,573,240,564,257,563,277,557,307,530,343,515,377,509,390,505,407,492,433,489,453,483,493,488,503,494,550,493,570,470,597,450,627,430,657,397,687,360,707,330,720,315,747,290,765,285,805,248,833,228,863,220,902,216,913,213,933,211,960,204,972,207,1007,207,1018,205,1033,207,1053,206,1093,197,1118,205,1150,230,1172,245,1183,259,1203,272,1233,295,1270,338,1310,373,1347,387,1367,396,1383,400,1407,412,1428,419,1437,419,1463,408,1487,403,1505,397,1550,383,1573,374,1630,338,1663,325,1687,310,1737,275,1790,248,1827,230,1877,199,1900,187,1917,177,1943,166];
var cy=[0,351,78,366,196,390,326,415,395,423,453,437,547,457,587,461,637,464,720,463,800,455,900,446,1000,440,1100,435,1273,431,1367,427,1450,424,1550,415,1697,394,1800,377,1883,362,1943,347];
function PL(a){var s="";for(var i=0;i<a.length;i+=2)s+=(i?"L":"M")+a[i]+" "+a[i+1];return s}
var rev=[];for(var i=lo.length-2;i>=0;i-=2)rev.push(lo[i],lo[i+1]);
function L(a,c,w,ex){return '<path d="'+PL(a)+'" fill="none" stroke="'+c+'" stroke-width="'+w+'" stroke-linejoin="round" '+(ex||"")+'/>'}
var h='<path d="'+PL(up.concat(rev))+'Z" fill="#f8a0a8" fill-opacity=".17"/>';
h+=L(up,"#ae66dc",1.15)+L(lo,"#ae66dc",1.15);
h+='<path d="'+wicks+'" stroke="#555" stroke-width="1.2" fill="none"/>'+gb+rb;
h+=L(sa,"#d87070",2.6)+L(cy,"#10f4ff",2.7,'stroke-dasharray="7 5"');
h+=L(gr,"#10c23c",2.6)+L(or,"#ff6a08",3.6);
h+=dots;
[[247,"#111"],[309.5,"#111"],[506,"#14861e"],[672,"#14861e"]].forEach(function(l){h+='<path d="M0 '+l[0]+'H1949" stroke="'+l[1]+'" stroke-width="2.5" stroke-dasharray="3.6 2.5"/>'});
[[4,537],[8,557],[20,538],[47,473],[86,149],[88,192],[108,176],[110,158],[113,225],[115,287],[128,353]].forEach(function(a){var x=X(a[0]),y=a[1];h+='<path d="M'+(x-1.8)+' '+y+'h3.6v5h2.4l-4.2 5l-4.2 -5h2.4z" fill="#dc1c1c"/>'});
[[14,567],[23,550],[54,492],[56,473],[65,329],[79,247],[96,239],[99,213],[123,323],[140,443],[147,402],[157,387],[159,376],[162,328],[173,262],[181,234],[183,216]].forEach(function(a){var x=X(a[0]),y=a[1];h+='<path d="M'+x+' '+y+'l4.2 5h-2.4v5h-3.6v-5h-2.4z" fill="#149a20"/>'});
document.getElementById("main").innerHTML=h;

// panel 1
var s1="";
[[34,0],[45,0],[64,0],[70,0],[85,0],[105,0],[120,1],[137,1],[169,0],[190,0]].forEach(function(a){var x=X(a[0]);
 s1+='<path d="M'+(x-9.7)+' 788L'+x+' 695L'+(x+9.7)+' 788Z" fill="'+(a[1]?"#a8eaa8":"#eeb2ae")+'" stroke="#444" stroke-width="1.3"/>'});
var e=X(199);
s1+='<path d="M'+(e-9.7)+' 788L'+e+' 695V788Z" fill="#eeb2ae"/><path d="M'+(e-9.7)+' 788L'+e+' 695" fill="none" stroke="#444" stroke-width="1.3"/>';
s1+='<path d="M0 788H'+e+'" stroke="#444" stroke-width="1.8"/>';
document.getElementById("p1").innerHTML=s1;

// panel 2: [first top bar,last top bar,green]
var s2="";
[[3,3,0],[11,11,1],[18,19,0],[60,60,0],[68,69,0],[93,95,1],[103,103,0],[105,105,0],[119,120,1],[132,132,1],[144,144,0],[151,152,0],[168,170,0],[175,175,0],[187,187,0]].forEach(function(a){var x1=X(a[0]),x2=X(a[1]);
 s2+='<path d="M'+(x1-9.7)+' 881L'+x1+' 800H'+x2+'L'+(x2+9.7)+' 881Z" fill="'+(a[2]?"#aef0ae":"#e8a0b0")+'" stroke="#111" stroke-width="2" stroke-linejoin="round"/>'});
s2+='<path d="M0 881H'+e+'" stroke="#111" stroke-width="2.2"/>';
document.getElementById("p2").innerHTML=s2;

// panel 3
function A(z){var o=[];for(var i=0;i<z.length;i+=2)o.push(z[i]/2.24,660+z[i+1]/3);return o}
function M(z){var o=[];for(var i=0;i<z.length;i+=2)o.push(z[i]*1.306,z[i+1]*1.306);return o}
function E(z){var o=[];for(var i=0;i<z.length;i+=2)o.push(1700+z[i]/3,660+z[i+1]/3);return o}
var G=A([0,860,35,850,60,850,85,870,105,897,125,897,148,885,170,895,190,940,210,998,232,994,260,935,300,880,320,855,340,843,363,820,395,830,425,845,450,870,473,900,495,885,515,815,538,785,580,863,605,845,628,827,668,810,690,787,735,850,755,830,790,835,810,850,843,875,865,860,885,835,915,822,955,820,975,850,995,858,1020,852,1060,912,1080,912,1100,900,1145,900,1190,845,1215,835,1235,815,1255,765,1278,722,1300,737,1325,770,1365,763,1385,778,1410,783,1450,745,1478,745,1505,770,1540,787,1568,775]).concat(M([560,697,590,700,615,695,640,698,665,715,690,730,700,731,725,722,750,708,765,703,785,712,810,718,835,730,855,750,880,755,900,750,925,733,945,737,965,750,985,760,1005,768,1020,760,1040,743,1060,733,1080,730,1100,725,1125,718,1150,722,1175,727,1195,718,1215,700,1245,693,1265,704,1285,700,1298,706])).concat(E([0,765,20,790,55,807,80,803,115,793,145,807,172,797,205,775,260,762,290,735,318,716,360,745,375,760,400,767,435,769,460,762,520,765,560,772,610,767,660,775,695,775,727,783]));
var R=A([0,870,35,863,60,853,80,858,105,867,140,872,165,880,185,900,210,925,232,937,255,937,280,941,320,928,340,910,365,875,395,855,425,840,450,847,473,855,495,857,535,845,580,850,630,826,690,825,750,820,800,825,820,835,840,853,870,845,910,847,930,842,975,842,1010,838,1030,845,1065,870,1100,885,1145,896,1170,897,1190,887,1235,857,1265,815,1295,790,1325,775,1365,757,1390,757,1425,770,1475,762,1520,768,1568,765]).concat(M([560,700,590,702,625,696,645,700,665,712,690,725,710,730,735,722,760,710,780,708,810,718,835,728,860,747,880,755,905,752,935,748,960,750,985,755,1005,763,1025,758,1050,750,1080,738,1110,727,1130,722,1160,725,1190,722,1215,708,1245,697,1265,700,1285,702,1298,703])).concat(E([0,775,30,777,55,784,85,778,115,785,170,798,232,790,280,770,320,757,365,750,465,750,525,765,575,770,610,767,690,770,727,777]));
var CU=A([0,843,100,838,165,840,205,823,320,825,400,815,490,813,530,797,630,790,690,775,860,775,930,770,950,782,1010,790,1100,788,1215,788,1300,762,1350,750,1430,745,1470,733,1568,723]).concat(M([560,692,600,685,640,688,670,695,700,708,740,706,780,705,820,712,860,730,900,738,960,740,1000,745,1040,730,1080,725,1130,720,1170,712,1220,703,1280,698,1298,697])).concat(E([0,733,50,730,170,730,230,727,320,714,380,714,410,718,470,725,560,730,610,727,680,728,727,731]));
var CL=A([0,925,30,920,100,920,180,913,230,945,400,950,540,955,700,952,910,940,950,910,1010,887,1060,900,1160,913,1210,907,1270,913,1430,915,1568,908]).concat(M([580,738,620,720,660,722,700,725,760,740,820,745,880,748,920,752,960,755,1003,770,1040,765,1080,760,1120,755,1170,750,1220,748,1260,742,1298,735])).concat(E([0,910,80,895,170,880,320,867,370,855,465,827,525,811,610,807,700,810,727,810]));
function I(a,x){for(var i=0;i<a.length-2;i+=2){if(x<=a[i+2]){var t=(x-a[i])/(a[i+2]-a[i]||1);return a[i+1]+t*(a[i+3]-a[i+1])}}return a[a.length-1]}
var fg="",fr="";
for(var x=0;x<1942;x+=1.5){var g=I(G,x+.75),r=I(R,x+.75),seg="M"+x+" "+Math.min(g,r).toFixed(1)+"V"+Math.max(g,r).toFixed(1)+"h1.5V"+Math.min(g,r).toFixed(1)+"z";if(g<r)fg+=seg;else fr+=seg}
function R2(a){return a.map(function(v){return Math.round(v*10)/10})}
var s3='<path d="'+fg+'" fill="#94f0a4"/><path d="'+fr+'" fill="#e8a0ae"/>';
s3+=L(R2(CU),"#4ce8f4",1.3)+L(R2(CL),"#4ce8f4",1.3)+L(R2(G),"#10e810",2)+L(R2(R),"#f80c0c",2.2);
document.getElementById("p3").innerHTML=s3;

// swatches
var T=["#fff","#ddd","#bbb","#999","#777","#000","#c8d8f8","#78a8f0","#50c0f8","#0000e0","#3030c8","#000090","#7010c0","#f080c0"];
var B=["#e08080","#f80000","#e04040","#905020","#ff8040","#ff9080","#ffc040","#ffff00","#40ffc0","#80ff80","#00e000","#40c040","#20a020","#008000"];
var sw="";T.forEach(function(c,i){sw+='<rect x="'+(504.5+8.84*i)+'" y="'+(i==5?50:52)+'" width="8.2" height="'+(i==5?11:9)+'" rx="1.3" fill="'+c+'"/>'});
B.forEach(function(c,i){sw+='<rect x="'+(504.5+8.84*i)+'" y="62" width="8.2" height="8" rx="1.3" fill="'+c+'" opacity=".85"/>'});
document.getElementById("sw").innerHTML=sw;
</script>
</body></html>
